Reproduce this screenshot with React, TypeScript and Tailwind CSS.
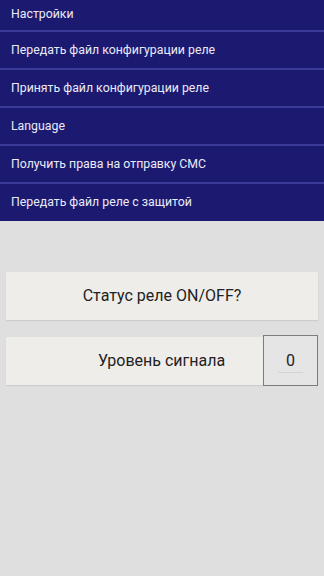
import React from 'react';

const items = [
  'Передать файл конфигурации реле',
  'Принять файл конфигурации реле',
  'Language',
  'Получить права на отправку СМС',
];

export default function App() {
  return (
    <div className="w-[324px] h-[576px] bg-[#dfdfdf] overflow-hidden" style={{ fontFamily: 'Roboto, "Noto Sans", sans-serif' }}>
      <div className="bg-[#1b1a70] text-[#eceaf8] text-[12.3px]">
        <div className="h-[32px] flex items-center pl-[11px] border-b-2 border-[#3b3a98] pb-[2px]">Настройки</div>
        {items.map((t) => (
          <div key={t} className="h-[38px] flex items-center pl-[11px] border-b-2 border-[#3b3a98]">
            {t}
          </div>
        ))}
        <div className="h-[37px] flex items-center pl-[11px]">Передать файл реле с защитой</div>
      </div>

      <div className="px-[6px] pt-[51px] flex flex-col">
        <button className="h-[48px] w-full bg-[#efedea] text-[#222] text-[16px] flex items-center justify-center shadow-[0_1px_1px_rgba(0,0,0,0.08)]">
          Статус реле ON/OFF?
        </button>
        <div className="mt-[15px] flex items-center">
          <button className="h-[48px] w-[258px] bg-[#efedea] text-[#222] text-[16px] flex items-center justify-center pl-[54px] shadow-[0_1px_1px_rgba(0,0,0,0.08)]">
            Уровень сигнала
          </button>
          <div className="w-[55px] h-[51px] bg-[#e5e5e5] border border-[#7c7c7c] flex flex-col items-center justify-center relative text-[16px] text-[#222]">
            <span>0</span>
            <div className="absolute bottom-[12px] left-[14px] right-[14px] h-px bg-[#d4d4d4]" />
          </div>
        </div>
      </div>
    </div>
  );
}
